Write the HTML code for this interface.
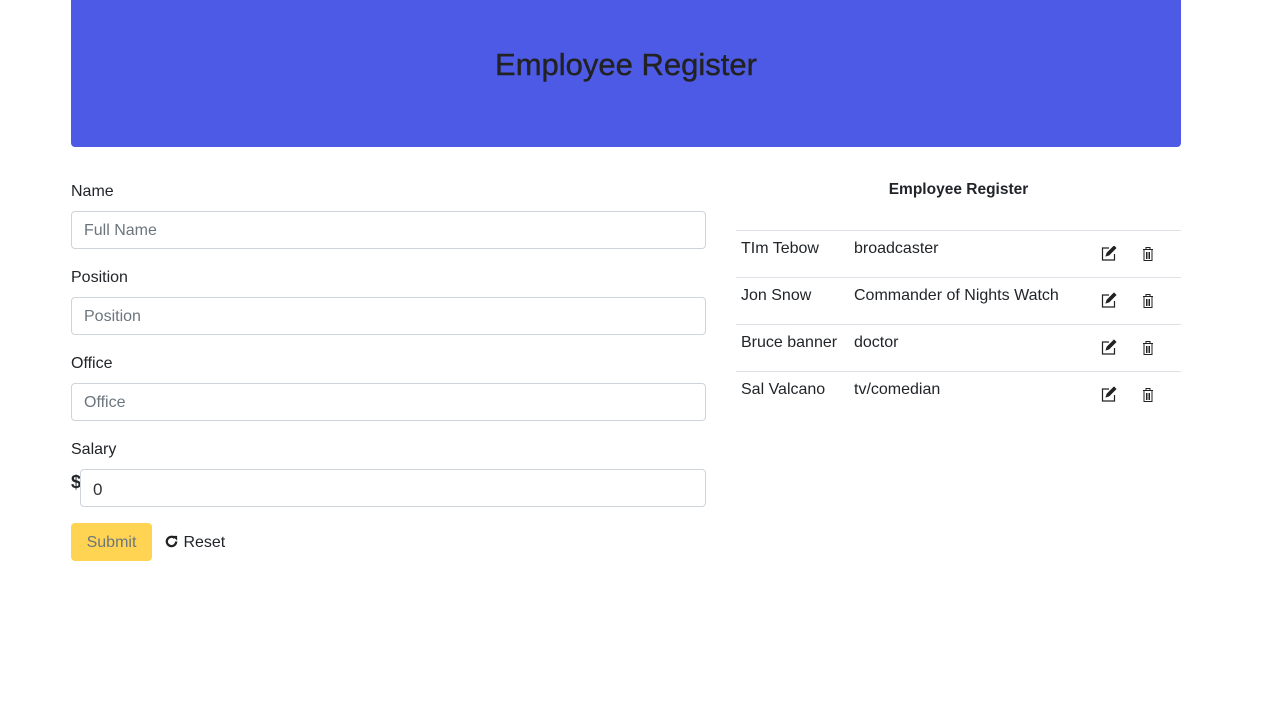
<!DOCTYPE html>
<html><head><style>
body{margin:0;font-family:"Liberation Sans",sans-serif;color:#212529;background:#fff;font-size:16px;}
.hdr{position:absolute;left:71px;top:0;width:1110px;height:147px;background:#4c5ae6;border-radius:0 0 4px 4px;}
.hdr h1{margin:0;position:absolute;top:47px;width:100%;text-align:center;font-size:31px;font-weight:normal;color:#222;-webkit-text-stroke:0.4px #222;}
label{position:absolute;left:71px;font-size:16px;}
.in{position:absolute;left:71px;width:633px;height:36px;border:1px solid #ced4da;border-radius:4px;box-sizing:content-box;}
.in span{position:absolute;left:12px;top:10px;color:#6c757d;}
.t{position:absolute;font-size:16px;}
.line{position:absolute;left:736px;width:445px;border-top:1px solid #dee2e6;}
</style></head><body>
<div class="hdr"><h1>Employee Register</h1></div>
<label style="top:183px">Name</label>
<div class="in" style="top:211px"><span>Full Name</span></div>
<label style="top:269px">Position</label>
<div class="in" style="top:297px"><span>Position</span></div>
<label style="top:355px">Office</label>
<div class="in" style="top:383px"><span>Office</span></div>
<label style="top:441px">Salary</label>
<div class="t" style="left:71px;top:472px;font-weight:bold;font-size:18px">$</div>
<div class="in" style="top:469px;left:80px;width:624px"><span style="color:#333;font-size:17px">0</span></div>
<div style="position:absolute;left:71px;top:523px;width:81px;height:38px;background:#ffd452;border-radius:4px;color:#6c757d;text-align:center;line-height:40px">Submit</div>
<div class="t" style="left:164px;top:534px"><svg width="15" height="15" viewBox="0 0 16 16" style="vertical-align:-2px"><path d="M13 8a5 5 0 1 1-1.6-3.7" fill="none" stroke="#222" stroke-width="2.4"/><path d="M9 2h5v5z" fill="#222"/></svg> Reset</div>
<div class="t" style="left:736px;width:445px;text-align:center;top:181px;font-weight:bold;font-size:15.5px">Employee Register</div>
<div class="line" style="top:230px"></div>
<div class="line" style="top:277px"></div>
<div class="line" style="top:324px"></div>
<div class="line" style="top:371px"></div>
<div class="t" style="left:741px;top:240px">TIm Tebow</div><div class="t" style="left:854px;top:240px">broadcaster</div>
<div class="t" style="left:741px;top:287px">Jon Snow</div><div class="t" style="left:854px;top:287px">Commander of Nights Watch</div>
<div class="t" style="left:741px;top:334px">Bruce banner</div><div class="t" style="left:854px;top:334px">doctor</div>
<div class="t" style="left:741px;top:381px">Sal Valcano</div><div class="t" style="left:854px;top:381px">tv/comedian</div>
<svg style="position:absolute;left:1100px;top:246px" width="62" height="160" viewBox="0 0 62 160">
<g id="r" fill="none" stroke="#222" stroke-width="1.2">
<path d="M9 2H2.5v12h12V8"/><path d="M6 10l1-3 7-7 2 2-7 7z" fill="#222" stroke-width="0.8"/>
<path d="M43 3.5h10M46 3.5V1.5h4v2M44 3.5v11h8v-11M46.5 6v7M48 6v7M49.5 6v7" stroke-width="1"/>
</g>
<use href="#r" y="47"/><use href="#r" y="94"/><use href="#r" y="141"/>
</svg>
</body></html>
